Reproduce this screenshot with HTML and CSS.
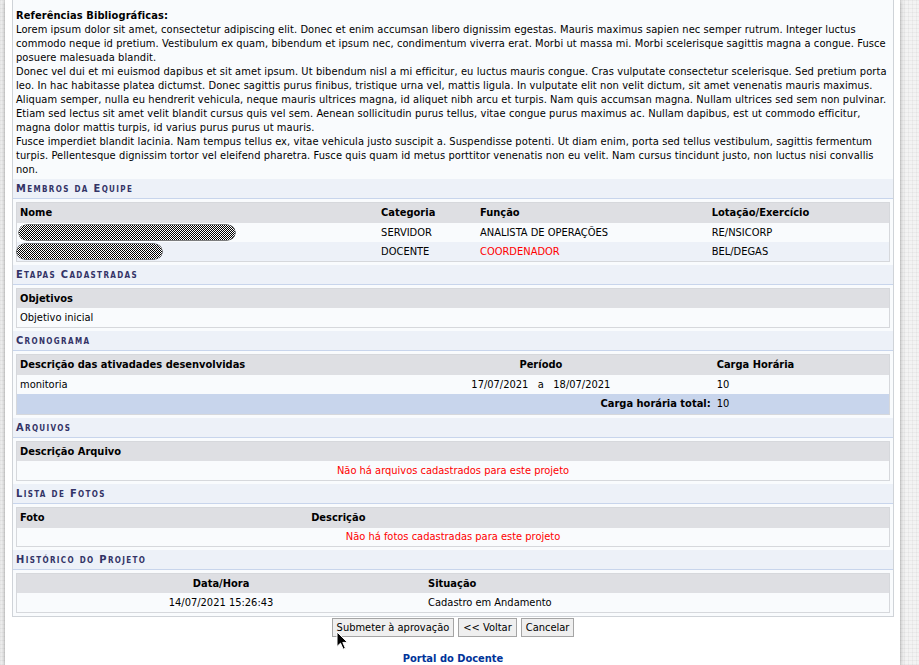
FILE: index.html
```html
<!DOCTYPE html>
<html lang="pt-BR">
<head>
<meta charset="utf-8">
<title>Projeto de Monitoria</title>
<link rel="stylesheet" href="styles.css">
</head>
<body>
<div class="page">
  <div class="panel">
    <div class="refs">
      <b>Referências Bibliográficas:</b><br>
      Lorem ipsum dolor sit amet, consectetur adipiscing elit. Donec et enim accumsan libero dignissim egestas. Mauris maximus sapien nec semper rutrum. Integer luctus commodo neque id pretium. Vestibulum ex quam, bibendum et ipsum nec, condimentum viverra erat. Morbi ut massa mi. Morbi scelerisque sagittis magna a congue. Fusce posuere malesuada blandit.<br>
      Donec vel dui et mi euismod dapibus et sit amet ipsum. Ut bibendum nisl a mi efficitur, eu luctus mauris congue. Cras vulputate consectetur scelerisque. Sed pretium porta leo. In hac habitasse platea dictumst. Donec sagittis purus finibus, tristique urna vel, mattis ligula. In vulputate elit non velit dictum, sit amet venenatis mauris maximus. Aliquam semper, nulla eu hendrerit vehicula, neque mauris ultrices magna, id aliquet nibh arcu et turpis. Nam quis accumsan magna. Nullam ultrices sed sem non pulvinar. Etiam sed lectus sit amet velit blandit cursus quis vel sem. Aenean sollicitudin purus tellus, vitae congue purus maximus ac. Nullam dapibus, est ut commodo efficitur, magna dolor mattis turpis, id varius purus purus ut mauris.<br>
      Fusce imperdiet blandit lacinia. Nam tempus tellus ex, vitae vehicula justo suscipit a. Suspendisse potenti. Ut diam enim, porta sed tellus vestibulum, sagittis fermentum turpis. Pellentesque dignissim tortor vel eleifend pharetra. Fusce quis quam id metus porttitor venenatis non eu velit. Nam cursus tincidunt justo, non luctus nisi convallis non.
    </div>

    <div class="sec">Membros da Equipe</div>
    <div class="box">
      <table class="list fixed">
        <colgroup><col class="w-nome"><col class="w-cat"><col class="w-func"><col class="w-lot"></colgroup>
        <tr><th>Nome</th><th>Categoria</th><th>Função</th><th>Lotação/Exercício</th></tr>
        <tr class="odd"><td><span class="redact r1"></span></td><td>SERVIDOR</td><td>ANALISTA DE OPERAÇÕES</td><td>RE/NSICORP</td></tr>
        <tr class="even"><td><span class="redact r2"></span></td><td>DOCENTE</td><td class="red">COORDENADOR</td><td>BEL/DEGAS</td></tr>
      </table>
    </div>

    <div class="sec">Etapas Cadastradas</div>
    <div class="box">
      <table class="list">
        <tr><th>Objetivos</th></tr>
        <tr class="odd"><td>Objetivo inicial</td></tr>
      </table>
    </div>

    <div class="sec">Cronograma</div>
    <div class="box">
      <table class="list fixed">
        <colgroup><col class="w-desc"><col class="w-per"><col class="w-carga"></colgroup>
        <tr><th>Descrição das ativadades desenvolvidas</th><th class="center">Período</th><th>Carga Horária</th></tr>
        <tr class="odd"><td>monitoria</td><td class="center">17/07/2021 &nbsp; a &nbsp; 18/07/2021</td><td>10</td></tr>
        <tr class="total"><td colspan="2" class="right"><b>Carga horária total:</b></td><td>10</td></tr>
      </table>
    </div>

    <div class="sec">Arquivos</div>
    <div class="box">
      <table class="list">
        <tr><th>Descrição Arquivo</th></tr>
        <tr class="odd"><td class="center red">Não há arquivos cadastrados para este projeto</td></tr>
      </table>
    </div>

    <div class="sec">Lista de Fotos</div>
    <div class="box">
      <table class="list fixed">
        <colgroup><col class="w-foto"><col class="w-fdesc"></colgroup>
        <tr><th>Foto</th><th>Descrição</th></tr>
        <tr class="odd"><td colspan="2" class="center red short">Não há fotos cadastradas para este projeto</td></tr>
      </table>
    </div>

    <div class="sec">Histórico do Projeto</div>
    <div class="box">
      <table class="list fixed">
        <colgroup><col class="w-data"><col class="w-sit"></colgroup>
        <tr><th class="center">Data/Hora</th><th>Situação</th></tr>
        <tr class="odd"><td class="center">14/07/2021 15:26:43</td><td>Cadastro em Andamento</td></tr>
      </table>
    </div>
  </div>

  <div class="actions">
    <button type="button" class="btn">Submeter à aprovação</button>
    <button type="button" class="btn">&lt;&lt; Voltar</button>
    <button type="button" class="btn">Cancelar</button>
    <svg class="cursor" width="14" height="20" viewBox="0 0 14 20" aria-hidden="true">
      <path d="M1 1 L1 15.5 L4.5 12.2 L7.2 18.2 L9.4 17.2 L6.8 11.4 L11.5 11.4 Z" fill="#000" stroke="#fff" stroke-width="1" stroke-linejoin="round"/>
    </svg>
  </div>

  <div class="portal"><a href="#">Portal do Docente</a></div>
</div>
</body>
</html>
```

FILE: styles.css
```css
html, body {
  margin: 0;
  padding: 0;
}

body {
  height: 665px;
  overflow: hidden;
  background-color: #f3f3f3;
  background-image:
    repeating-linear-gradient(0deg, rgba(0,0,0,0.035) 0 1px, transparent 1px 4px),
    repeating-linear-gradient(90deg, rgba(0,0,0,0.035) 0 1px, transparent 1px 4px);
  font-family: "DejaVu Sans Condensed", "DejaVu Sans", Verdana, sans-serif;
  font-stretch: condensed;
  font-size: 11px;
  color: #000;
}

.page {
  width: 895px;
  margin-left: 5px;
  box-sizing: border-box;
  padding: 0 6px 0 7px;
  min-height: 665px;
  background: #fff;
  box-shadow: 0 0 5px rgba(0,0,0,0.35);
  position: relative;
}

.panel {
  background: #f9fbfd;
  border: 1px solid #cfd3d8;
  border-top: none;
}

.refs {
  padding: 9px 3px 2px 3px;
  line-height: 14px;
  letter-spacing: 0.09px;
}

.sec {
  background: #edf1f8;
  border-bottom: 1px solid #c8d5ec;
  height: 19px;
  line-height: 19px;
  padding-left: 3px;
  font-weight: bold;
  font-variant: small-caps;
  letter-spacing: 1.35px;
  color: #333366;
  font-size: 11px;
}

.box {
  padding: 3px;
}

.list {
  width: 100%;
  border-collapse: collapse;
  border: 1px solid #d6d8dc;
}

.list.fixed {
  table-layout: fixed;
}

.list th {
  background: #dedfe3;
  height: 20px;
  padding: 0 3px;
  text-align: left;
  font-weight: bold;
  white-space: nowrap;
  box-sizing: border-box;
}

.list td {
  height: 19px;
  padding: 0 3px;
  white-space: nowrap;
}

.list td.short { height: 18px; }

.list tr.odd td { background: #f9fbfd; }
.list tr.even td { background: #edf1f8; }
.list tr.total td { background: #c8d5ec; height: 20px; }

.center { text-align: center !important; }
.right { text-align: right; }
.red { color: #ff0000; }

.w-nome { width: 41.42%; }
.w-cat { width: 11.33%; }
.w-func { width: 26.54%; }
.w-lot { width: 20.71%; }
.w-desc { width: 40.27%; }
.w-per { width: 39.59%; }
.w-carga { width: 20.14%; }
.w-foto { width: 33.41%; }
.w-fdesc { width: 66.59%; }
.w-data { width: 46.8%; }
.w-sit { width: 53.2%; }

.redact {
  display: inline-block;
  vertical-align: middle;
  height: 15px;
  border-radius: 8px / 7px;
  background: repeating-conic-gradient(#000 0 25%, #fff 0 50%) 0 0 / 2px 2px;
  box-shadow: 0 0 0 0.5px #000;
}
.r1 { width: 216px; margin-left: -1px; }
.r2 { width: 145px; margin-left: -3px; }

.actions {
  display: flex;
  justify-content: center;
  gap: 4px;
  margin-top: 1px;
  position: relative;
}

.btn {
  font-family: inherit;
  font-stretch: inherit;
  font-size: 11px;
  color: #000;
  background: #efefef;
  border: 1px solid #a5a5a5;
  border-radius: 0;
  height: 19px;
  padding: 0 4px;
  margin: 0;
  line-height: 17px;
}

.cursor {
  position: absolute;
  left: 324px;
  top: 13px;
}

.portal {
  text-align: center;
  margin-top: 15px;
  line-height: 14px;
}

.portal a {
  color: #003399;
  font-weight: bold;
  text-decoration: none;
}
```
